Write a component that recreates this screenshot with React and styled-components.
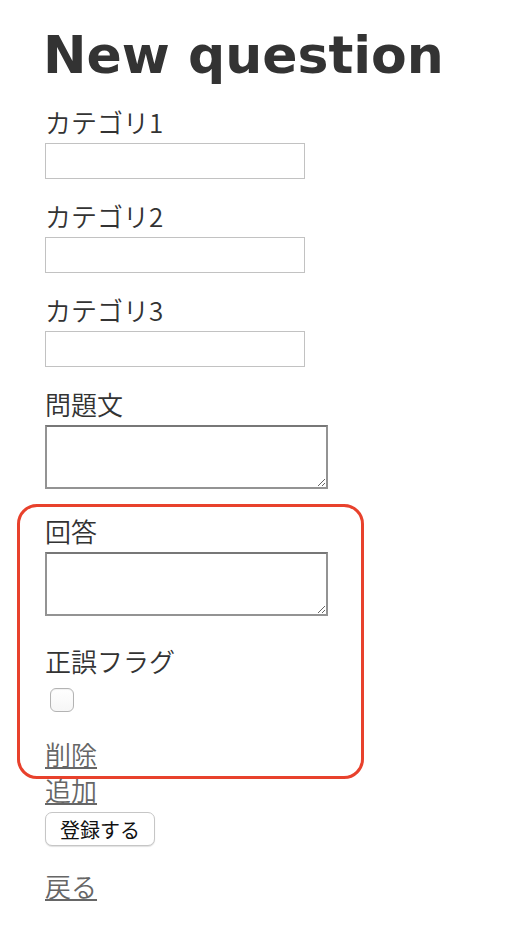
import React from "react";
import styled, { createGlobalStyle } from "styled-components";

const Global = createGlobalStyle`
  html, body { margin: 0; padding: 0; background: #fff; }
  body {
    color: #333;
    font-family: "Noto Sans CJK JP", "DejaVu Sans", sans-serif;
  }
  * { box-sizing: border-box; }
`;

const Page = styled.div`
  padding: 25px 0 30px 45px;
  display: flex;
  flex-direction: column;
  align-items: flex-start;
`;

const Title = styled.h1`
  margin: 0 0 22px -2px;
  font-family: "DejaVu Sans", Verdana, sans-serif;
  font-weight: bold;
  font-size: 52px;
  line-height: 60px;
  color: #333;
`;

const Field = styled.div`
  display: flex;
  flex-direction: column;
  align-items: flex-start;
  margin-bottom: ${(p) => p.$gap ?? 22}px;
`;

const Label = styled.label`
  font-size: 26px;
  font-weight: 350;
  line-height: 29px;
  height: 36px;
  padding-bottom: 7px;
  color: #333;
`;

const TextInput = styled.input`
  display: block;
  width: 260px;
  height: 36px;
  margin: 0;
  border: 1px solid #c2c2c2;
  background: #fff;
  outline: none;
`;

const TextArea = styled.textarea`
  display: block;
  width: 283px;
  height: 64px;
  margin: 0;
  border: 2px solid #939393;
  border-top-color: #777;
  background: #fff;
  outline: none;
`;

const Group = styled.div`
  width: 347px;
  margin: 15px 0 -6px -28px;
  padding: 9px 0 3px 25px;
  border: 3px solid #e8412c;
  border-radius: 20px;
  display: flex;
  flex-direction: column;
  align-items: flex-start;
`;

const Check = styled.input.attrs({ type: "checkbox" })`
  appearance: none;
  -webkit-appearance: none;
  width: 24px;
  height: 24px;
  margin: 6px 0 0 5px;
  border: 1px solid #b3b3b3;
  border-radius: 6px;
  background: linear-gradient(#fff, #f6f6f6);
  box-shadow: inset 0 1px 1px rgba(0, 0, 0, 0.06);
`;

const LinkText = styled.a`
  display: block;
  font-size: 26px;
  font-weight: 350;
  line-height: 33px;
  height: 36px;
  padding-bottom: 3px;
  color: #666;
  text-decoration: underline;
  text-decoration-thickness: 2px;
  text-underline-offset: 2px;
  margin-top: ${(p) => p.$top ?? 0}px;
`;

const Button = styled.button`
  margin-top: 3px;
  width: 110px;
  height: 34px;
  padding: 0;
  font-family: "Noto Sans CJK JP", sans-serif;
  font-size: 20px;
  color: #111;
  background: #fff;
  border: 1px solid #c6c6c6;
  border-radius: 7px;
  box-shadow: 0 1px 1px rgba(0, 0, 0, 0.12);
`;

export default function App() {
  return (
    <>
      <Global />
      <Page>
        <Title>New question</Title>
        <Field>
          <Label>カテゴリ1</Label>
          <TextInput type="text" />
        </Field>
        <Field>
          <Label>カテゴリ2</Label>
          <TextInput type="text" />
        </Field>
        <Field>
          <Label>カテゴリ3</Label>
          <TextInput type="text" />
        </Field>
        <Field $gap={0}>
          <Label>問題文</Label>
          <TextArea />
        </Field>
        <Group>
          <Field $gap={30}>
            <Label>回答</Label>
            <TextArea />
          </Field>
          <Field $gap={0}>
            <Label>正誤フラグ</Label>
            <Check />
          </Field>
          <LinkText href="#" $top={25}>削除</LinkText>
        </Group>
        <LinkText href="#">追加</LinkText>
        <Button type="button">登録する</Button>
        <LinkText href="#" $top={23}>戻る</LinkText>
      </Page>
    </>
  );
}
